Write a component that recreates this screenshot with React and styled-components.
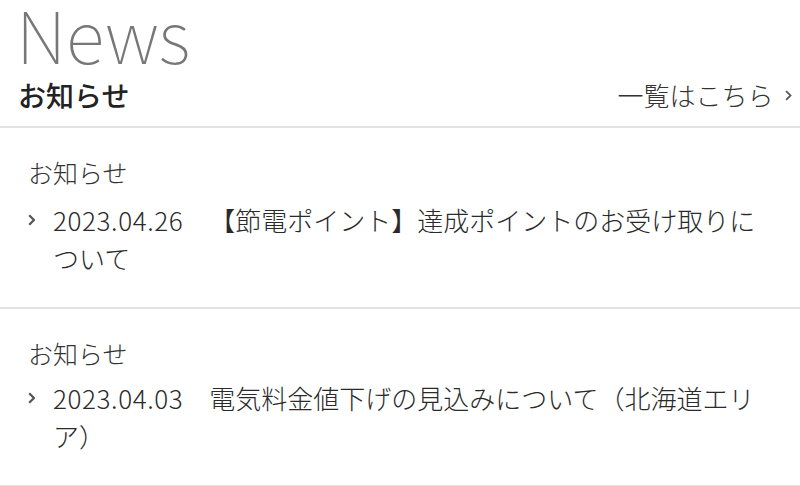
import styled, { createGlobalStyle } from "styled-components";

const GlobalStyle = createGlobalStyle`
  html, body {
    margin: 0;
    padding: 0;
    background-color: #ffffff;
  }
  body {
    font-family: "Noto Sans CJK JP", "Noto Sans", sans-serif;
    color: #333333;
  }
`;

const Section = styled.section`
  width: 800px;
`;
const Header = styled.div`
  padding: 0 8px 11px 16px;
  border-bottom: 2px solid #e2e2e2;
`;
const BigTitle = styled.div`
  font-size: 72px;
  line-height: 66px;
  font-weight: 100;
  color: #777777;
`;
const HeadRow = styled.div`
  display: flex;
  justify-content: space-between;
  align-items: center;
  margin-top: 9px;
  padding-left: 2px;
`;
const SubTitle = styled.h2`
  margin: 0;
  font-size: 28px;
  line-height: 40px;
  font-weight: 500;
  color: #222222;
`;
const MoreLink = styled.a`
  display: flex;
  align-items: center;
  gap: 12px;
  font-size: 26px;
  line-height: 40px;
  font-weight: 300;
  color: #333333;
  text-decoration: none;
  cursor: pointer;
`;
const List = styled.ul`
  margin: 0;
  padding: 0;
  list-style: none;
`;
const Item = styled.li`
  padding: 25px 28px 30px 28px;
  border-bottom: 2px solid #e2e2e2;
`;
const Category = styled.div`
  font-size: 25px;
  line-height: 38px;
  font-weight: 300;
  color: #333333;
`;
const Entry = styled.div`
  display: flex;
  margin-top: ${(p) => p.$gap}px;
  font-size: 26px;
  line-height: 38px;
  font-weight: 300;
  color: #2a2a2a;
`;
const Arrow = styled.span`
  flex: 0 0 25px;
  display: flex;
  align-items: center;
  height: 38px;
`;
const Text = styled.div`
  flex: 1;
`;
const Date = styled.span`
  margin-right: 26px;
  letter-spacing: 0.6px;
`;

const Chevron = ({ size = 12, color = "#555", weight = 1.6 }) => (
  <svg width={size * 0.6} height={size} viewBox="0 0 6 10">
    <path d="M1 1l4 4-4 4" fill="none" stroke={color} strokeWidth={weight} />
  </svg>
);

const news = [
  {
    category: "お知らせ",
    date: "2023.04.26",
    title: "【節電ポイント】達成ポイントのお受け取りについて",
    gap: 10,
  },
  {
    category: "お知らせ",
    date: "2023.04.03",
    title: "電気料金値下げの見込みについて（北海道エリア）",
    gap: 7,
  },
];

const App = () => {
  return (
    <Section>
      <GlobalStyle />
      <Header>
        <BigTitle>News</BigTitle>
        <HeadRow>
          <SubTitle>お知らせ</SubTitle>
          <MoreLink>
            一覧はこちら
            <Chevron size={11} color="#555" />
          </MoreLink>
        </HeadRow>
      </Header>
      <List>
        {news.map((n) => (
          <Item key={n.date}>
            <Category>{n.category}</Category>
            <Entry $gap={n.gap}>
              <Arrow>
                <Chevron size={12} color="#555" weight={1.9} />
              </Arrow>
              <Text>
                <Date>{n.date}</Date>
                {n.title}
              </Text>
            </Entry>
          </Item>
        ))}
      </List>
    </Section>
  );
};

export default App;
